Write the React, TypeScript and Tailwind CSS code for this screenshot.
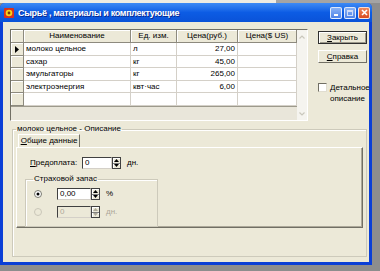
import React from 'react';

type Row = { name: string; unit: string; rub: string; usd: string };

const rows: Row[] = [
  { name: 'молоко цельное', unit: 'л', rub: '27,00', usd: '' },
  { name: 'сахар', unit: 'кг', rub: '45,00', usd: '' },
  { name: 'эмульгаторы', unit: 'кг', rub: '265,00', usd: '' },
  { name: 'электроэнергия', unit: 'квт·час', rub: '6,00', usd: '' },
  { name: '', unit: '', rub: '', usd: '' },
];

const rowHeights = ['h-[13px]', 'h-[12px]', 'h-[13px]', 'h-[12px]', 'h-[13px]'];

const Spin = ({ disabled }: { disabled?: boolean }) => {
  const c = disabled ? '#aca899' : '#000';
  return (
    <div className="flex flex-col w-[9px] h-[12px] border border-[#404040] bg-[#ece9d8]">
      <div className="flex-1 flex items-center justify-center border-b border-[#808080] shadow-[inset_1px_1px_0_#fff]">
        <svg width="5" height="3" viewBox="0 0 5 3">
          <path d="M0 3L2.5 0L5 3Z" fill={c} />
        </svg>
      </div>
      <div className="flex-1 flex items-center justify-center shadow-[inset_1px_1px_0_#fff]">
        <svg width="5" height="3" viewBox="0 0 5 3">
          <path d="M0 0L2.5 3L5 0Z" fill={c} />
        </svg>
      </div>
    </div>
  );
};

const Field = ({ value, width, disabled }: { value: string; width: string; disabled?: boolean }) => (
  <div
    className={`${width} h-[12px] border border-t-[#404040] border-l-[#404040] border-r-[#d4d0c8] border-b-[#d4d0c8] pl-[2px] text-[8px] leading-[10px] ${
      disabled ? 'bg-[#ece9d8] text-[#aca899]' : 'bg-white text-black'
    }`}
  >
    {value}
  </div>
);

const Radio = ({ checked, disabled }: { checked?: boolean; disabled?: boolean }) => (
  <svg width="8" height="8" viewBox="0 0 8 8">
    <circle cx="4" cy="4" r="3.5" fill={disabled ? '#ece9d8' : '#fff'} stroke={disabled ? '#c9c6b8' : '#7a7a70'} />
    {checked && <circle cx="4" cy="4" r="1.5" fill="#000" />}
  </svg>
);

const TitleButtons = () => (
  <div className="flex items-center gap-[2px] mr-[2px]">
    <div className="w-[12px] h-[12px] rounded-[2px] border border-white/80 bg-gradient-to-b from-[#8ab2f5] to-[#4e82e8] flex items-end justify-start pl-[3px] pb-[2px]">
      <div className="w-[4px] h-[2px] bg-white" />
    </div>
    <div className="w-[12px] h-[12px] rounded-[2px] border border-white/80 bg-gradient-to-b from-[#8ab2f5] to-[#4e82e8] flex items-center justify-center">
      <div className="w-[6px] h-[6px] border border-t-2 border-[#cfdcf8]" />
    </div>
    <div className="w-[12px] h-[12px] rounded-[2px] border border-white/80 bg-gradient-to-b from-[#f0875a] to-[#d84a1e] flex items-center justify-center">
      <svg width="7" height="7" viewBox="0 0 7 7">
        <path d="M1 1L6 6M6 1L1 6" stroke="#fff" strokeWidth="1.6" />
      </svg>
    </div>
  </div>
);

const Grid = () => (
  <div className="w-[298px] h-[92px] flex border border-t-[#716f64] border-l-[#716f64] border-r-white border-b-white">
    <div className="flex-1 flex flex-col bg-[#e9e6da] text-[8px] leading-[10px]">
      {/* header */}
      <div className="flex h-[13px] bg-[#ece9d8]">
        <div className="w-[13px] border-r border-b border-[#8d8a7e] shadow-[inset_1px_1px_0_#fff]" />
        <div className="w-[107px] flex items-center justify-center border-r border-b border-[#8d8a7e] shadow-[inset_1px_1px_0_#fff]">Наименование</div>
        <div className="w-[46px] flex items-center justify-center border-r border-b border-[#8d8a7e] shadow-[inset_1px_1px_0_#fff]">Ед. изм.</div>
        <div className="w-[61px] flex items-center justify-center border-r border-b border-[#8d8a7e] shadow-[inset_1px_1px_0_#fff]">Цена(руб.)</div>
        <div className="w-[59px] flex items-center justify-center border-r border-b border-[#8d8a7e] shadow-[inset_1px_1px_0_#fff]">Цена($ US)</div>
      </div>
      {rows.map((r, i) => (
        <div key={i} className={`flex ${rowHeights[i]}`}>
          <div className="w-[13px] flex items-center justify-center bg-[#ece9d8] border-r border-b border-[#8d8a7e] shadow-[inset_1px_1px_0_#fff]">
            {i === 0 && (
              <svg width="4" height="7" viewBox="0 0 4 7">
                <path d="M0 0L4 3.5L0 7Z" fill="#000" />
              </svg>
            )}
          </div>
          <div className="w-[107px] flex items-center pl-[2px] bg-white border-r border-b border-[#d4d0c8]">{r.name}</div>
          <div className="w-[46px] flex items-center pl-[2px] bg-white border-r border-b border-[#d4d0c8]">{r.unit}</div>
          <div className="w-[61px] flex items-center justify-end pr-[2px] bg-white border-r border-b border-[#d4d0c8]">{r.rub}</div>
          <div className="w-[59px] flex items-center justify-end pr-[2px] bg-white border-r border-b border-[#d4d0c8]">{r.usd}</div>
        </div>
      ))}
      <div className="flex-1 border-t border-[#9d9a8c]" />
    </div>
    {/* scrollbar, disabled */}
    <div className="w-[10px] flex flex-col justify-between bg-[#f5f4ef] py-[2px]">
      <div className="h-[9px] flex items-center justify-center">
        <svg width="6" height="4" viewBox="0 0 6 4">
          <path d="M0.5 3.5L3 1L5.5 3.5" stroke="#c9c7bc" fill="none" strokeWidth="1.2" />
        </svg>
      </div>
      <div className="h-[9px] flex items-center justify-center">
        <svg width="6" height="4" viewBox="0 0 6 4">
          <path d="M0.5 0.5L3 3L5.5 0.5" stroke="#c9c7bc" fill="none" strokeWidth="1.2" />
        </svg>
      </div>
    </div>
  </div>
);

export default function App() {
  return (
    <div className="w-[380px] h-[271px] bg-[#8d8d8d] overflow-hidden font-['Liberation_Sans',Arial,sans-serif] text-black">
      <div className="flex h-[3px]">
        <div className="w-[276px] bg-[#efece2]" />
        <div className="flex-1 bg-[#a4a4a4]" />
      </div>
      <div className="w-[372px] h-[262px] flex flex-col bg-[#0b3fd6] rounded-t-[5px]">
        {/* title bar */}
        <div className="h-[19px] flex items-center justify-between rounded-t-[5px] bg-gradient-to-b from-[#3d8af5] via-[#0c5ce4] to-[#0a52d8]">
          <div className="flex items-center gap-[3px] pl-[4px]">
            <svg width="10" height="10" viewBox="0 0 10 10">
              <rect x="0" y="0" width="10" height="10" rx="1" fill="#d8321c" />
              <circle cx="5" cy="5" r="3.3" fill="#f6d418" />
              <circle cx="5" cy="5" r="1.4" fill="#7a3a10" />
            </svg>
            <span className="text-white font-bold text-[9px] tracking-[-0.3px] leading-[12px] ml-[1px] [text-shadow:1px_1px_0_#0a2a90]">
              Сырьё , материалы и комплектующие
            </span>
          </div>
          <TitleButtons />
        </div>

        {/* client area */}
        <div className="flex-1 mx-[3px] mb-[3px] bg-[#ece9d8] flex flex-col">
          <div className="flex mt-[7px] ml-[7px]">
            <Grid />
            <div className="ml-[10px] mt-[2px] flex flex-col text-[8px] leading-[10px]">
              <div className="w-[49px] h-[13px] flex items-center justify-center border border-[#303030] shadow-[inset_1px_1px_0_#fff,inset_-1px_-1px_0_#9d9a8c]">
                <span><span className="underline">З</span>акрыть</span>
              </div>
              <div className="w-[49px] h-[13px] mt-[6px] flex items-center justify-center border border-t-white border-l-white border-r-[#716f64] border-b-[#716f64]">
                <span><span className="underline">С</span>правка</span>
              </div>
              <div className="flex mt-[19px]">
                <div className="w-[9px] h-[9px] mt-[1px] bg-white border border-t-[#716f64] border-l-[#716f64] border-r-[#e0ddd0] border-b-[#e0ddd0]" />
                <div className="ml-[3px] leading-[11px]">
                  <div><span className="underline">Д</span>етальное</div>
                  <div>описание</div>
                </div>
              </div>
            </div>
          </div>

          <fieldset className="mt-[3px] ml-[9px] w-[355px] h-[133px] border border-[#cdcabb] px-[3px] pb-[6px] shadow-[inset_1px_1px_0_#fff] text-[8px] leading-[10px] flex flex-col">
            <legend className="ml-[0px] px-[1px]">молоко цельное - Описание</legend>
            {/* tab */}
            <div className="flex ml-[2px]">
              <div className="w-[62px] h-[13px] flex items-center justify-center border-t border-l border-r border-t-white border-l-white border-r-[#716f64]">
                <span><span className="underline">О</span>бщие данные</span>
              </div>
            </div>
            {/* tab page */}
            <div className="flex-1 border border-t-white border-l-white border-r-[#716f64] border-b-[#716f64] shadow-[inset_-1px_-1px_0_#aca899]">
              <div className="flex items-center mt-[9px] ml-[13px]">
                <span className="w-[52px]"><span className="underline">П</span>редоплата:</span>
                <Field value="0" width="w-[30px]" />
                <Spin />
                <span className="ml-[6px]">дн.</span>
              </div>
              <fieldset className="mt-[5px] ml-[8px] w-[133px] h-[53px] border border-[#cdcabb] shadow-[inset_1px_1px_0_#fff] pl-[8px]">
                <legend className="ml-[-1px] px-[1px]">Страховой запас</legend>
                <div className="flex items-center mt-[4px]">
                  <Radio checked />
                  <div className="ml-[15px] flex items-center">
                    <Field value="0,00" width="w-[34px]" />
                    <Spin />
                    <span className="ml-[6px]">%</span>
                  </div>
                </div>
                <div className="flex items-center mt-[6px]">
                  <Radio disabled />
                  <div className="ml-[15px] flex items-center">
                    <Field value="0" width="w-[34px]" disabled />
                    <Spin disabled />
                    <span className="ml-[6px] text-[#aca899]">дн.</span>
                  </div>
                </div>
              </fieldset>
            </div>
          </fieldset>
        </div>
      </div>
    </div>
  );
}
